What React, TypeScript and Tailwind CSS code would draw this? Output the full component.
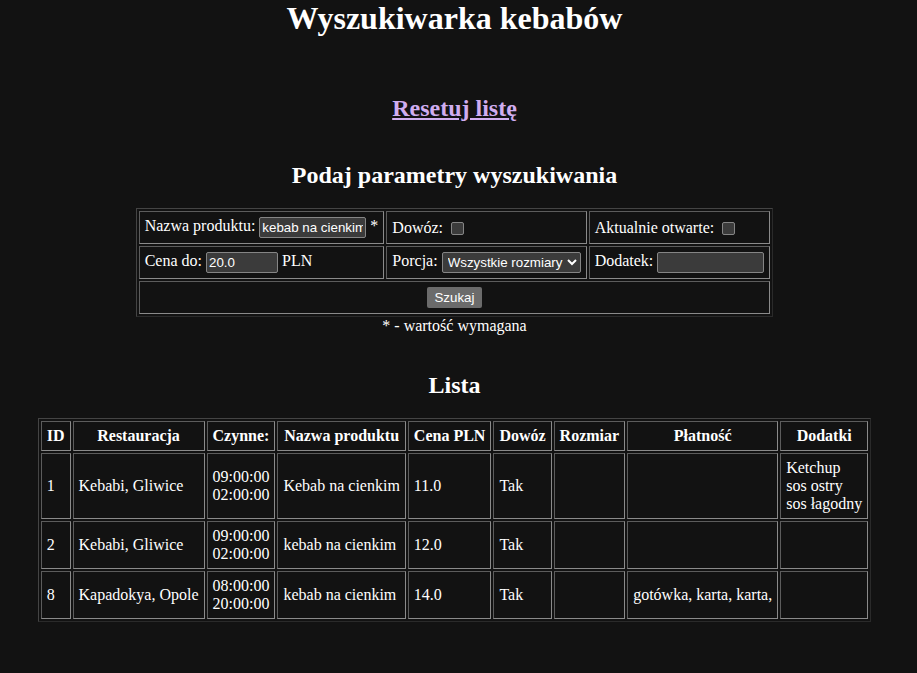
import React from 'react'

const rows = [
  { id: '1', rest: 'Kebabi, Gliwice', open: ['09:00:00', '02:00:00'], name: 'Kebab na cienkim', price: '11.0', delivery: 'Tak', size: '', pay: '', extras: ['Ketchup', 'sos ostry', 'sos łagodny'] },
  { id: '2', rest: 'Kebabi, Gliwice', open: ['09:00:00', '02:00:00'], name: 'kebab na cienkim', price: '12.0', delivery: 'Tak', size: '', pay: '', extras: [] },
  { id: '8', rest: 'Kapadokya, Opole', open: ['08:00:00', '20:00:00'], name: 'kebab na cienkim', price: '14.0', delivery: 'Tak', size: '', pay: 'gotówka, karta, karta,', extras: [] },
]

const headers = ['ID', 'Restauracja', 'Czynne:', 'Nazwa produktu', 'Cena PLN', 'Dowóz', 'Rozmiar', 'Płatność', 'Dodatki']

const cell = 'p-[5px] leading-[18px] border border-t-[#5c5c5c] border-l-[#5c5c5c] border-b-[#8a8a8a] border-r-[#8a8a8a]'
const table = 'mx-auto border-separate border-spacing-[2px] border border-t-[#444] border-l-[#444] border-b-[#2a2a2a] border-r-[#2a2a2a]'
const field = "h-[21px] rounded-[2px] border border-[#858585] bg-[#3b3b3b] px-[2px] text-[13.33px] text-white font-['Liberation_Sans',Arial,sans-serif] align-middle"
const box = 'appearance-none w-[13px] h-[13px] mx-[4px] rounded-[2px] border border-[#858585] bg-[#3b3b3b] align-middle'

export default function App() {
  return (
    <div className="min-h-screen bg-[#121212] pr-[8px] text-white font-['Liberation_Serif','Times_New_Roman',serif] text-[16px] leading-[normal] [color-scheme:dark]">
      <h1 className="text-center text-[32px] font-bold">Wyszukiwarka kebabów</h1>

      <h2 className="mt-[58px] text-center text-[24px] font-bold">
        <a href="#" className="text-[#d0adf0] underline">Resetuj listę</a>
      </h2>

      <h2 className="mt-[40px] text-center text-[24px] font-bold">Podaj parametry wyszukiwania</h2>

      <form className="mt-[19px]" onSubmit={(e) => e.preventDefault()}>
        <table className={table}>
          <tbody>
            <tr>
              <td className={cell}>
                Nazwa produktu: <input className={`${field} w-[107px]`} defaultValue="kebab na cienkim" /> *
              </td>
              <td className={cell}>
                Dowóz: <input type="checkbox" className={box} />
              </td>
              <td className={cell}>
                Aktualnie otwarte: <input type="checkbox" className={box} />
              </td>
            </tr>
            <tr>
              <td className={cell}>
                Cena do: <input className={`${field} w-[72px]`} defaultValue="20.0" /> PLN
              </td>
              <td className={cell}>
                Porcja:{' '}
                <select className={`${field} w-[139px] !pl-[1px] !pr-0`} defaultValue="all">
                  <option value="all">Wszystkie rozmiary</option>
                  <option value="small">Mała</option>
                  <option value="big">Duża</option>
                </select>
              </td>
              <td className={cell}>
                Dodatek: <input className={`${field} w-[107px]`} />
              </td>
            </tr>
            <tr>
              <td colSpan={3} className={`${cell} text-center`}>
                <button className="h-[21px] rounded-[2px] bg-[#6b6b6b] px-[7px] text-[13.33px] text-white font-['Liberation_Sans',Arial,sans-serif] align-middle">
                  Szukaj
                </button>
              </td>
            </tr>
          </tbody>
        </table>
        <div className="text-center">* - wartość wymagana</div>
      </form>

      <h2 className="mt-[37px] text-center text-[24px] font-bold">Lista</h2>

      <table className={`${table} mt-[19px]`}>
        <thead>
          <tr>
            {headers.map((h) => (
              <th key={h} className={`${cell} font-bold text-center`}>{h}</th>
            ))}
          </tr>
        </thead>
        <tbody>
          {rows.map((r) => (
            <tr key={r.id}>
              <td className={cell}>{r.id}</td>
              <td className={cell}>{r.rest}</td>
              <td className={cell}>
                {r.open[0]}
                <br />
                {r.open[1]}
              </td>
              <td className={cell}>{r.name}</td>
              <td className={cell}>{r.price}</td>
              <td className={cell}>{r.delivery}</td>
              <td className={cell}>{r.size}</td>
              <td className={cell}>{r.pay}</td>
              <td className={cell}>
                {r.extras.map((x) => (
                  <div key={x}>{x}</div>
                ))}
              </td>
            </tr>
          ))}
        </tbody>
      </table>
    </div>
  )
}
